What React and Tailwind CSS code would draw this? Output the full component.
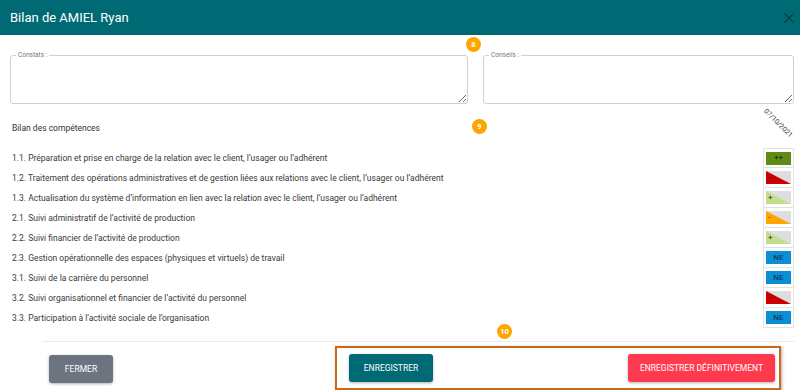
import React from "react";

const rows = [
  ["1.1. Préparation et prise en charge de la relation avec le client, l’usager ou l’adhérent", "pp"],
  ["1.2. Traitement des opérations administratives et de gestion liées aux relations avec le client, l’usager ou l’adhérent", "mm"],
  ["1.3. Actualisation du système d’information en lien avec la relation avec le client, l’usager ou l’adhérent", "p"],
  ["2.1. Suivi administratif de l’activité de production", "m"],
  ["2.2. Suivi financier de l’activité de production", "p"],
  ["2.3. Gestion opérationnelle des espaces (physiques et virtuels) de travail", "ne"],
  ["3.1. Suivi de la carrière du personnel", "ne"],
  ["3.2. Suivi organisationnel et financier de l’activité du personnel", "mm"],
  ["3.3. Participation à l’activité sociale de l’organisation", "ne"],
];

function Badge({ n }) {
  return (
    <span className="flex h-[15px] w-[15px] items-center justify-center rounded-full bg-[#ffa500] text-[7.5px] font-bold leading-none text-white">
      {n}
    </span>
  );
}

function Tri({ color, label }) {
  return (
    <div className="relative h-[13px] w-[25px] bg-[#dedede]">
      <svg className="absolute inset-0" width="25" height="13" viewBox="0 0 25 13">
        <polygon points="0,0 25,13 0,13" fill={color} />
      </svg>
      <span className="absolute left-[2px] top-[1px] text-[8px] leading-[11px] text-[#222]">{label}</span>
    </div>
  );
}

function Indicator({ kind }) {
  if (kind === "pp")
    return (
      <div className="flex h-[13px] w-[25px] items-center justify-center bg-[#5e8c16] text-[8px] leading-none text-[#111]">++</div>
    );
  if (kind === "ne")
    return (
      <div className="flex h-[13px] w-[25px] items-center justify-center bg-[#0a8fd4] text-[8px] leading-none text-[#0b2a44]">NE</div>
    );
  if (kind === "mm") return <Tri color="#cc0000" label="- -" />;
  if (kind === "m") return <Tri color="#ffa500" label="-" />;
  return <Tri color="#c2e08c" label="+" />;
}

export default function App() {
  return (
    <div className="relative h-[390px] w-[800px] overflow-hidden bg-white" style={{ fontFamily: "Roboto, 'Liberation Sans', sans-serif" }}>
      <div className="flex h-[35px] items-center justify-between bg-[#006a74] pl-[10px] pr-[4px]">
        <span className="text-[13px] text-white">Bilan de AMIEL Ryan</span>
        <svg width="12" height="12" viewBox="0 0 12 12" className="mr-[1px]">
          <path d="M1.5 1.5 L10.5 10.5 M10.5 1.5 L1.5 10.5" stroke="#0d3b40" strokeWidth="1.1" />
        </svg>
      </div>

      <div className="relative flex pl-[10px] pr-[6px] pt-[20px]">
        <div className="relative w-[458px]">
          <textarea className="block h-[49px] w-full resize rounded-[3px] border border-[#d0d0d0] outline-none" />
          <span className="absolute left-[6px] top-[-4px] bg-white px-[2px] text-[6.5px] leading-[8px] text-[#777]">Constats :</span>
        </div>
        <div className="relative ml-[15px] flex-1">
          <textarea className="block h-[49px] w-full resize rounded-[3px] border border-[#d0d0d0] outline-none" />
          <span className="absolute left-[6px] top-[-4px] bg-white px-[2px] text-[6.5px] leading-[8px] text-[#777]">Conseils :</span>
        </div>
        <div className="absolute left-[466px] top-[2px]">
          <Badge n="8" />
        </div>
      </div>

      <div className="relative flex h-[44px] items-center pl-[12px] pr-[6px]">
        <span className="mt-[4px] text-[8.5px] text-[#333]">Bilan des compétences</span>
        <div className="absolute left-[472px] top-[15px]">
          <Badge n="9" />
        </div>
        <span className="absolute right-[4px] top-[16px] origin-center rotate-45 text-[7px] leading-none text-[#444]">07/10/2021</span>
      </div>

      <div className="pl-[12px] pr-[6px]">
        {rows.map(([label, kind], i) => (
          <div key={i} className="flex h-[20px] items-center">
            <span className="flex-1 text-[8.5px] text-[#3a3a3a]">{label}</span>
            <div className={"flex h-[20px] w-[31px] items-center justify-center border-x border-[#e2e2e2] " + (i === 0 ? "border-t " : "") + "border-b"}>
              <Indicator kind={kind} />
            </div>
          </div>
        ))}
      </div>

      <div className="relative ml-[42px] mr-[6px] mt-[13px] h-px bg-[#ececec]">
        <div className="absolute left-[455px] top-[-17px]">
          <Badge n="10" />
        </div>
      </div>

      <div className="flex items-start pt-[4px]">
        <button className="ml-[49px] mt-[9px] h-[28px] w-[64px] rounded-[3px] bg-[#6c7480] text-[8.5px] text-white shadow-[0_1px_3px_rgba(0,0,0,0.3)]">FERMER</button>
        <div className="ml-[222px] flex h-[44px] w-[446px] items-center justify-between border-2 border-[#c76a1c] pl-[12px] pr-[4px] shadow-[1px_1px_3px_rgba(0,0,0,0.3)]">
          <button className="h-[28px] w-[84px] rounded-[3px] bg-[#006a74] text-[8.5px] text-white shadow-[0_1px_3px_rgba(0,0,0,0.3)]">ENREGISTRER</button>
          <button className="h-[28px] w-[147px] rounded-[3px] bg-[#ff3a4e] text-[8.5px] text-white shadow-[0_1px_3px_rgba(0,0,0,0.3)]">ENREGISTRER DÉFINITIVEMENT</button>
        </div>
      </div>
    </div>
  );
}
